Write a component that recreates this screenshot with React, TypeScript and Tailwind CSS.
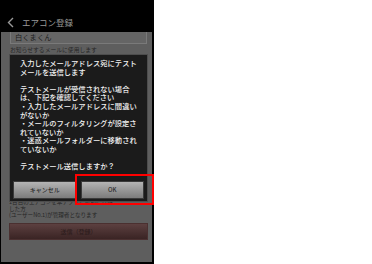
import React from 'react';

const dialogLines: string[] = [
  '入力したメールアドレス宛にテスト',
  'メールを送信します',
  '',
  'テストメールが受信されない場合',
  'は、下記を確認してください',
  '・入力したメールアドレスに間違い',
  'がないか',
  '・メールのフィルタリングが設定さ',
  'れていないか',
  '・迷惑メールフォルダーに移動され',
  'ていないか',
  '',
  'テストメール送信しますか？',
];

const App: React.FC = () => {
  return (
    <div className="relative w-[372px] h-[264px] bg-white overflow-hidden font-['Noto_Sans_CJK_JP',sans-serif]">
      {/* phone */}
      <div className="flex flex-col w-[154px] h-[264px] bg-black">
        <div className="flex items-center h-[32px] pt-[12px] pl-[7px] text-[#9a9a9a]">
          <svg width="8" height="11" viewBox="0 0 8 11" className="mr-[7px]">
            <polyline points="6,1 1.5,5.5 6,10" fill="none" stroke="#9a9a9a" strokeWidth="1.4" />
          </svg>
          <span className="text-[8.5px] leading-none">エアコン登録</span>
        </div>
        <div className="flex flex-col flex-1 ml-[1px] mr-[2px] mb-[2px] bg-[#5e5e5e]">
          <div className="ml-[9px] w-[137px] h-[12px] flex items-center pl-[4px] bg-[#656565] border border-t-0 border-[#7a7a7a] text-[7.3px] leading-none text-[#1c1c1c]">
            白くまくん
          </div>
          <div className="ml-[9px] mt-[3px] text-[5.8px] leading-[6px] text-[#262626] whitespace-nowrap">
            お知らせするメールに使用します
          </div>
          <div className="ml-[8px] mt-[146px] text-[5.6px] leading-[6.5px] text-[#262626] whitespace-nowrap">
            <div>1台目のエアコンを本アプリに最初に登録</div>
            <div>した方</div>
            <div>(ユーザーNo.1)が管理者となります</div>
          </div>
          <div className="ml-[8px] mt-[4px] w-[139px] h-[17px] flex items-center justify-center bg-gradient-to-b from-[#5c4040] to-[#3a2424] border border-[#4a3030] text-[6px] text-[#2a1a1a]">
            送信（登録）
          </div>
        </div>
      </div>

      {/* dialog */}
      <div className="absolute left-[9px] top-[54px] w-[139px] h-[148px] flex flex-col bg-[#1b1b1b] border border-[#4d4d4d]">
        <div className="pl-[10px] pt-[4px] text-[7.3px] leading-[8.6px] font-medium text-[#f2f2f2] whitespace-nowrap">
          {dialogLines.map((line, i) => (
            <div key={i} className="h-[8.6px]">{line}</div>
          ))}
        </div>
        <div className="flex gap-[4px] px-[3px] mt-[10px]">
          <div className="flex-1 h-[18px] flex items-center justify-center bg-gradient-to-b from-[#b4b4b4] to-[#7c7c7c] border border-[#3a3a3a] text-[6px] font-medium text-[#2a2a2a]">
            キャンセル
          </div>
          <div className="flex-1 h-[18px] flex items-center justify-center bg-gradient-to-b from-[#b4b4b4] to-[#7c7c7c] border border-[#3a3a3a] text-[6px] font-medium text-[#2a2a2a]">
            OK
          </div>
        </div>
      </div>

      {/* highlight */}
      <div className="absolute left-[75px] top-[174px] w-[79px] h-[31px] border-2 border-[#ff0000]" />
    </div>
  );
};

export default App;
